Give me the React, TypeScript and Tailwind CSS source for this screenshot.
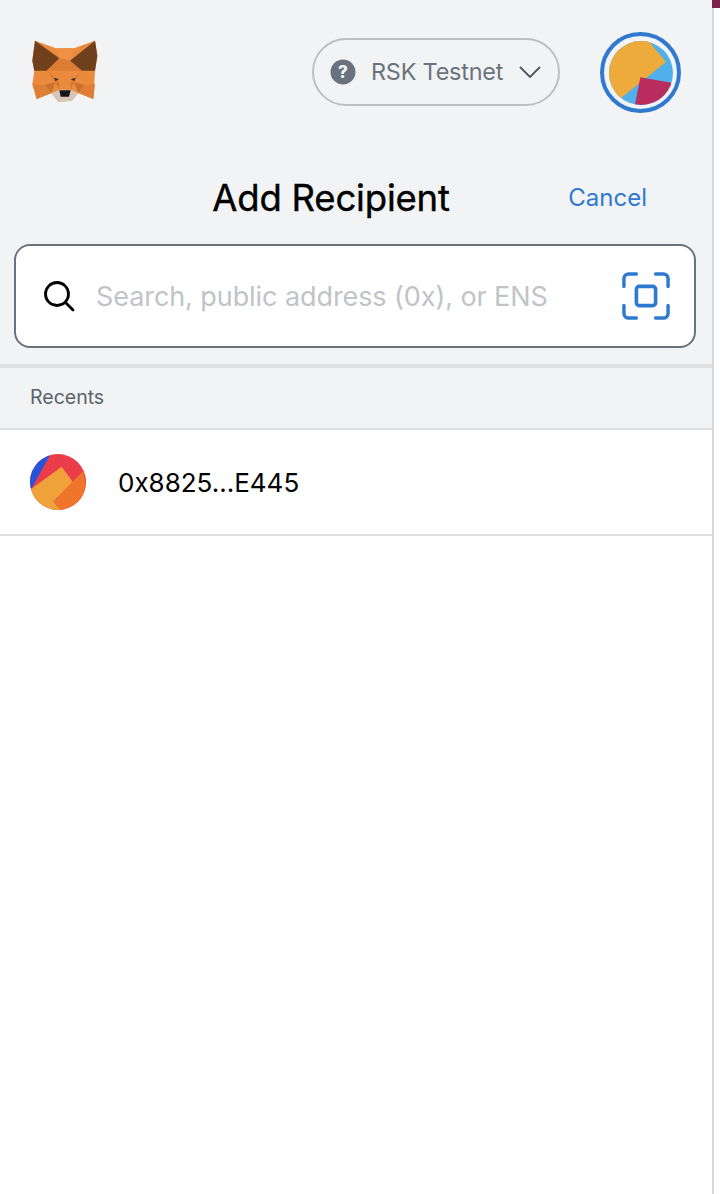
import React from "react";

function Fox() {
  return (
    <svg width="70" height="64" viewBox="90 60 210 192" className="shrink-0">
      <polygon points="105,65 168,88 222,88 285,65 292,110 285,155 280,240 235,222 215,245 175,248 155,222 110,240 97,195 103,155 97,125" fill="#e98a3c" />
      <polygon points="105,65 178,118 140,155 103,155 97,125" fill="#70401d" />
      <polygon points="285,65 210,125 245,155 285,155 292,110" fill="#70401d" />
      <polygon points="168,88 222,88 210,125 178,118" fill="#ee9245" />
      <polygon points="178,118 210,125 205,155 143,155" fill="#dd7d33" />
      <polygon points="210,125 245,155 205,155" fill="#dd7d33" />
      <polygon points="143,155 178,190 178,212 165,190" fill="#d9762f" />
      <polygon points="245,155 212,190 212,212 222,190" fill="#d9762f" />
      <polygon points="97,195 135,198 155,222 110,240" fill="#df7f35" />
      <polygon points="280,240 235,222 252,198 285,195" fill="#df7f35" />
      <polygon points="135,198 165,190 155,222" fill="#c9702f" />
      <polygon points="252,198 222,190 235,222" fill="#c9702f" />
      <polygon points="155,222 178,212 212,212 235,222 215,245 175,248" fill="#d7c6b8" />
      <polygon points="178,214 212,214 207,233 182,233" fill="#161616" />
      <polygon points="163,176 177,181 166,186" fill="#233447" />
      <polygon points="226,176 212,181 223,186" fill="#233447" />
    </svg>
  );
}

function AccountAvatar() {
  return (
    <div className="w-[81px] h-[81px] rounded-full border-4 border-[#3079d0] flex items-center justify-center shrink-0">
      <svg width="64" height="64" viewBox="54 119 192 192" className="rounded-full">
        <rect x="54" y="119" width="192" height="192" fill="#4fb0ec" />
        <polygon points="225,182 180,128 185,100 30,100 30,320 60,320 90,290" fill="#ecab3b" />
        <polygon points="148,228 245,245 260,330 128,330" fill="#b82c5e" />
      </svg>
    </div>
  );
}

function RecipientAvatar() {
  return (
    <svg width="56" height="56" viewBox="90 42 168 168" className="rounded-full shrink-0">
      <rect x="90" y="42" width="168" height="168" fill="#ea3c49" />
      <polygon points="150,45 95,145 80,145 80,40 150,40" fill="#2653dc" />
      <polygon points="185,80 218,125 160,185 185,212 130,220 80,212 92,148" fill="#f0a23a" />
      <polygon points="250,92 270,215 185,215 160,185" fill="#ee7529" />
    </svg>
  );
}

export default function App() {
  return (
    <div className="w-[720px] h-[1194px] flex bg-white overflow-hidden font-['Inter','Liberation_Sans',sans-serif]">
      <main className="w-[712px] flex flex-col">
        <header className="bg-[#f2f3f4] flex flex-col">
          <div className="h-[144px] pl-[30px] pr-[31px] pt-[32px] flex items-start">
            <div className="mt-[7px]">
              <Fox />
            </div>
            <button className="ml-auto mt-[6px] w-[248px] h-[68px] rounded-full border-2 border-[#bbc0c5] flex items-center pl-[16px] pr-[17px] text-[#6a737d]">
              <svg width="26" height="26" viewBox="0 0 26 26" className="shrink-0">
                <circle cx="13" cy="13" r="12.5" fill="#6a737d" />
                <text x="13" y="19" textAnchor="middle" fontSize="17" fontWeight="800" fill="#f2f3f4" fontFamily="Inter, sans-serif">?</text>
              </svg>
              <span className="ml-[15px] text-[23.4px] leading-none whitespace-nowrap tracking-[-0.2px]">RSK Testnet</span>
              <svg width="22" height="12" viewBox="0 0 22 12" fill="none" className="ml-auto shrink-0">
                <path d="M1 1l10 10L21 1" stroke="#4d5560" strokeWidth="1.8" />
              </svg>
            </button>
            <div className="ml-[40px]">
              <AccountAvatar />
            </div>
          </div>
          <div className="relative h-[100px] flex items-start justify-center">
            <h1 className="ml-[-50px] mt-[31px] text-[36.5px] leading-[46px] font-normal text-black tracking-[-0.2px] [-webkit-text-stroke:0.4px_black]">Add Recipient</h1>
            <span className="absolute right-[65px] top-[39px] text-[24px] leading-[30px] text-[#3079d0]">Cancel</span>
          </div>
          <div className="ml-[14px] mr-[16px] mb-[16px] h-[104px] rounded-[16px] border-2 border-[#6a737d] bg-white flex items-center pl-[26px] pr-[24px]">
            <svg width="34" height="34" viewBox="0 0 34 34" fill="none" className="shrink-0">
              <circle cx="15" cy="15" r="11.5" stroke="#000" strokeWidth="2.8" />
              <path d="M23.5 23.5L31 31" stroke="#000" strokeWidth="2.8" strokeLinecap="round" />
            </svg>
            <span className="ml-[20px] text-[27px] leading-none text-[#c0c4c8] whitespace-nowrap tracking-[-0.08px]">Search, public address (0x), or ENS</span>
            <svg width="48" height="48" viewBox="0 0 50 50" fill="none" className="ml-auto shrink-0">
              <path d="M15 2H7a5 5 0 0 0-5 5v8M35 2h8a5 5 0 0 1 5 5v8M15 48H7a5 5 0 0 1-5-5v-8M35 48h8a5 5 0 0 0 5-5v-8" stroke="#3079d0" strokeWidth="3.6" strokeLinecap="round" />
              <rect x="15" y="15" width="20" height="20" rx="3" stroke="#3079d0" strokeWidth="3.8" />
            </svg>
          </div>
        </header>
        <section className="bg-[#f2f3f4] h-[66px] border-t-4 border-[#e0e0e0] border-b-2 border-b-[#dedede] flex items-center pl-[30px]">
          <span className="text-[19.5px] leading-none text-[#5a626c]">Recents</span>
        </section>
        <div className="h-[106px] border-b-2 border-[#dedede] flex items-center pl-[30px] bg-white">
          <RecipientAvatar />
          <span className="ml-[32px] mt-[2px] text-[26px] leading-none text-black">0x8825...E445</span>
        </div>
      </main>
      <aside className="w-[8px] flex flex-col">
        <div className="h-[8px] bg-[#7c1f4c]" />
        <div className="flex-1 border-l-2 border-[#d8d8d8]" />
      </aside>
    </div>
  );
}
